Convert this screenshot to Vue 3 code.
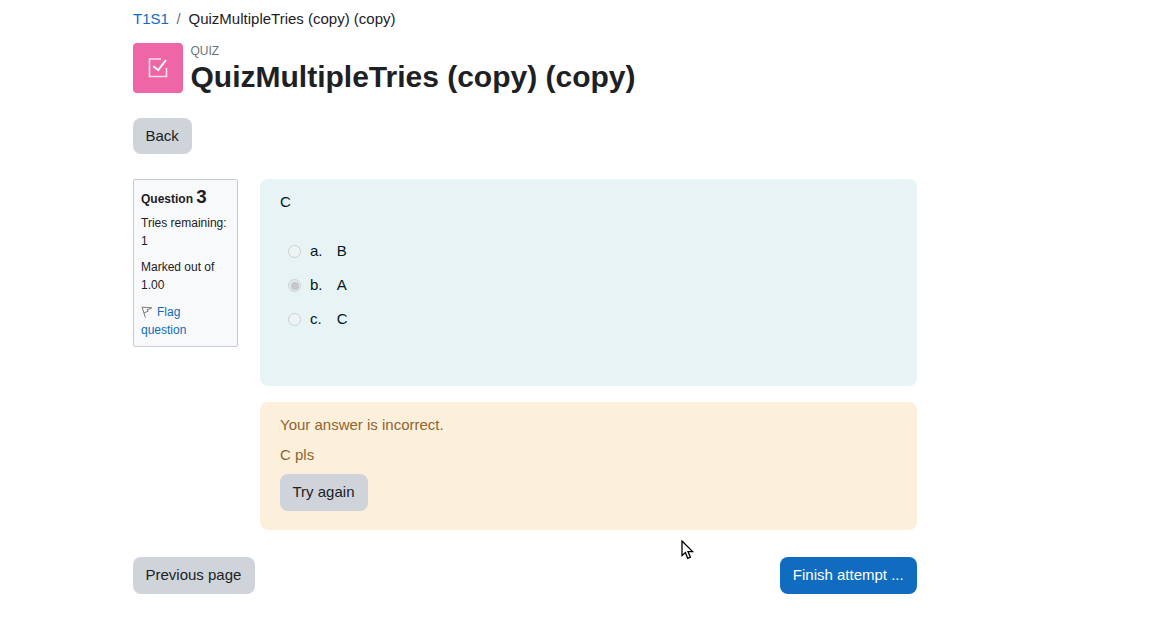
<script setup>
const answers = [
  { letter: 'a.', text: 'B', checked: false },
  { letter: 'b.', text: 'A', checked: true },
  { letter: 'c.', text: 'C', checked: false }
]
</script>

<template>
  <div class="page">
    <nav class="crumbs">
      <a class="link">T1S1</a>
      <span class="sep">/</span>
      <span>QuizMultipleTries (copy) (copy)</span>
    </nav>

    <header class="head">
      <div class="icon-box">
        <svg width="24" height="24" viewBox="0 0 24 24" fill="none" stroke="#fff" stroke-width="1.6">
          <path d="M15 3H3.5V20.5H20.5V12" stroke-opacity="0.8" />
          <path d="M7.3 10.2L12.2 14L20 4" stroke-width="2" />
        </svg>
      </div>
      <div class="head-text">
        <div class="kind">QUIZ</div>
        <h1 class="title">QuizMultipleTries (copy) (copy)</h1>
      </div>
    </header>

    <button class="btn back">Back</button>

    <div class="question">
      <aside class="info">
        <div class="qno">Question <span class="num">3</span></div>
        <div class="state">Tries remaining:<br />1</div>
        <div class="state">Marked out of<br />1.00</div>
        <div class="flag">
          <svg class="flag-icon" width="12" height="12" viewBox="0 0 12 12" fill="none" stroke="#7d7d7d" stroke-width="1">
            <path d="M1 0.8L4.4 11.5" />
            <path d="M1 1.2L10.8 1.8L6 3.8L7.2 5.2L2.8 7" />
          </svg>
          <a class="link flag-link">Flag question</a>
        </div>
      </aside>

      <div class="main">
        <section class="formulation">
          <div class="qtext">C</div>
          <div class="answers">
            <div v-for="a in answers" :key="a.letter" class="answer">
              <span class="radio" :class="{ on: a.checked }"></span>
              <span class="letter">{{ a.letter }}</span>
              <span>{{ a.text }}</span>
            </div>
          </div>
        </section>

        <section class="feedback">
          <div class="fb-line">Your answer is incorrect.</div>
          <div class="fb-line">C pls</div>
          <button class="btn">Try again</button>
        </section>
      </div>
    </div>

    <div class="nav-row">
      <button class="btn">Previous page</button>
      <button class="btn primary">Finish attempt ...</button>
    </div>

    <svg class="cursor" width="14" height="20" viewBox="0 0 14 20">
      <path d="M1 1V15.5L4.4 12.6L6.7 18.3L9.4 17.2L7 11.6H11.6Z" fill="#fff" stroke="#000" stroke-width="1.3" stroke-linejoin="miter" />
    </svg>
  </div>
</template>

<style>
html, body {
  margin: 0;
  background: #fff;
}
</style>

<style scoped>
.page {
  position: relative;
  width: 784px;
  height: 644px;
  margin-left: 133px;
  font-family: "Liberation Sans", Arial, sans-serif;
  font-size: 15px;
  line-height: 22.5px;
  color: #1d2125;
  overflow: hidden;
}

.link {
  color: #0f6cbf;
}

.crumbs {
  padding-top: 8px;
  height: 43px;
  box-sizing: border-box;
  display: flex;
}

.sep {
  color: #6a737b;
  padding: 0 7.75px;
}

.head {
  display: flex;
  height: 50px;
}

.icon-box {
  width: 50px;
  height: 50px;
  border-radius: 4px;
  background: #ee66a5;
  display: flex;
  align-items: center;
  justify-content: center;
}

.head-text {
  margin-left: 7.5px;
}

.kind {
  font-size: 12px;
  line-height: 16px;
  color: #6a737b;
}

.title {
  margin: 0;
  font-size: 30px;
  line-height: 36px;
  font-weight: 700;
}

.btn {
  display: block;
  font-family: inherit;
  font-size: 15px;
  line-height: 22.5px;
  padding: 7px 13.3px 7px 12.5px;
  height: 37px;
  border: 0;
  border-radius: 8px;
  background: #ced4da;
  color: #1d2125;
}

.back {
  margin-top: 25px;
  height: 36px;
}

.question {
  display: flex;
  margin-top: 25px;
}

.info {
  width: 105px;
  height: 168px;
  box-sizing: border-box;
  flex: none;
  padding: 8px 9px 7px 7px;
  border: 1px solid #c6ccd2;
  border-radius: 2px;
  background: #f8f9fa;
  font-size: 12px;
  line-height: 18px;
}

.qno {
  font-weight: 700;
  height: 18px;
}

.num {
  font-size: 18.75px;
}

.state {
  margin-top: 8px;
}

.flag {
  margin-top: 9px;
}

.flag-icon {
  vertical-align: -2px;
  margin-right: 4px;
}

.main {
  margin-left: 22px;
  width: 657px;
}

.formulation {
  height: 207px;
  box-sizing: border-box;
  padding: 12px 20px;
  border-radius: 8px;
  background: #e7f3f5;
  color: #001a1e;
}

.answers {
  margin-top: 21px;
  padding-left: 8px;
}

.answer {
  display: flex;
  align-items: center;
  height: 34px;
}

.radio {
  width: 11px;
  height: 11px;
  border: 1px solid #ccd1d3;
  border-radius: 50%;
  background: #eef3f4;
  margin-right: 9px;
  position: relative;
}

.radio.on {
  background: #e6e9ea;
}

.radio.on::after {
  content: "";
  position: absolute;
  left: 1.5px;
  top: 1.5px;
  width: 8px;
  height: 8px;
  border-radius: 50%;
  background: #c4c8ca;
}

.letter {
  width: 26.75px;
}

.feedback {
  margin-top: 16px;
  height: 128px;
  box-sizing: border-box;
  padding: 12px 20px;
  border-radius: 8px;
  background: #fcefdc;
  color: #8e662e;
}

.fb-line {
  margin-bottom: 7px;
}

.fb-line + .fb-line {
  margin-bottom: 8px;
}

.nav-row {
  display: flex;
  justify-content: space-between;
  margin-top: 27px;
}

.primary {
  background: #0f6cbf;
  color: #fff;
}

.cursor {
  position: absolute;
  left: 548px;
  top: 540px;
}
</style>
